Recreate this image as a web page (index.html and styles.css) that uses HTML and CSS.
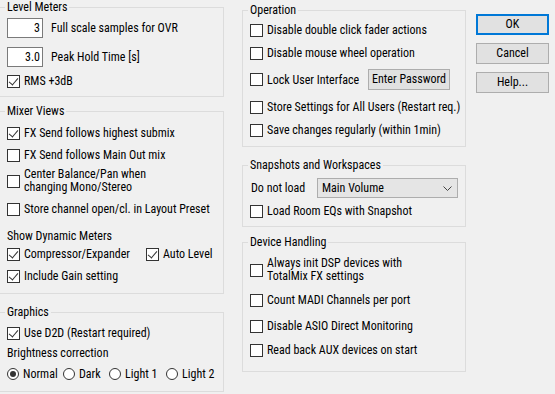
FILE: index.html
```html
<!DOCTYPE html>
<html lang="en">
<head>
	<meta charset="UTF-8">
	<title>Settings</title>
	<link rel="stylesheet" href="styles.css">
</head>
<body>
	<div class="dialog">
		<!-- left column -->
		<div class="col col-left">
			<div class="group g-level">
				<span class="group-title">Level Meters</span>
				<div class="field mt3"><span class="num">3</span><span>Full scale samples for OVR</span></div>
				<div class="field mt9"><span class="num">3.0</span><span>Peak Hold Time [s]</span></div>
				<div class="check mt6"><span class="cb on"></span><span>RMS +3dB</span></div>
			</div>
			<div class="group g-mixer">
				<span class="group-title">Mixer Views</span>
				<div class="check mt6"><span class="cb on"></span><span>FX Send follows highest submix</span></div>
				<div class="check mt6"><span class="cb"></span><span>FX Send follows Main Out mix</span></div>
				<div class="check two mt5"><span class="cb"></span><span>Center Balance/Pan when<br>changing Mono/Stereo</span></div>
				<div class="check mt7"><span class="cb"></span><span>Store channel open/cl. in Layout Preset</span></div>
				<div class="label mt11">Show Dynamic Meters</div>
				<div class="line mt2">
					<div class="check comp"><span class="cb on"></span><span>Compressor/Expander</span></div>
					<div class="check"><span class="cb on"></span><span>Auto Level</span></div>
				</div>
				<div class="check mt6"><span class="cb on"></span><span>Include Gain setting</span></div>
			</div>
			<div class="group g-graphics">
				<span class="group-title">Graphics</span>
				<div class="check mt5"><span class="cb on"></span><span>Use D2D (Restart required)</span></div>
				<div class="label mt4">Brightness correction</div>
				<div class="line mt5">
					<div class="radio r-normal"><span class="rb on"></span><span>Normal</span></div>
					<div class="radio r-dark"><span class="rb"></span><span>Dark</span></div>
					<div class="radio r-light"><span class="rb"></span><span>Light 1</span></div>
					<div class="radio"><span class="rb"></span><span>Light 2</span></div>
				</div>
			</div>
		</div>

		<!-- middle column -->
		<div class="col col-mid">
			<div class="group g-op">
				<span class="group-title">Operation</span>
				<div class="check mt4"><span class="cb"></span><span>Disable double click fader actions</span></div>
				<div class="check mt7"><span class="cb"></span><span>Disable mouse wheel operation</span></div>
				<div class="line lock mt8">
					<div class="check lock-label"><span class="cb"></span><span>Lock User Interface</span></div>
					<span class="btn pw">Enter Password</span>
				</div>
				<div class="check mt9"><span class="cb"></span><span>Store Settings for All Users (Restart req.)</span></div>
				<div class="check mt7"><span class="cb"></span><span>Save changes regularly (within 1min)</span></div>
			</div>
			<div class="group g-snap">
				<span class="group-title">Snapshots and Workspaces</span>
				<div class="line combo-row mt5">
					<span class="combo-label">Do not load</span>
					<span class="combo">Main Volume
						<svg class="chev" width="9" height="5" viewBox="0 0 9 5"><polyline points="0.5,0.5 4.5,4.5 8.5,0.5" fill="none" stroke="#444" stroke-width="1"/></svg>
					</span>
				</div>
				<div class="check mt5"><span class="cb"></span><span>Load Room EQs with Snapshot</span></div>
			</div>
			<div class="group g-dev">
				<span class="group-title">Device Handling</span>
				<div class="check two mt7"><span class="cb"></span><span>Always init DSP devices with<br>TotalMix FX settings</span></div>
				<div class="check mt9"><span class="cb"></span><span>Count MADI Channels per port</span></div>
				<div class="check mt10"><span class="cb"></span><span>Disable ASIO Direct Monitoring</span></div>
				<div class="check mt8"><span class="cb"></span><span>Read back AUX devices on start</span></div>
			</div>
		</div>

		<!-- buttons -->
		<div class="col col-btns">
			<span class="btn default">OK</span>
			<span class="btn">Cancel</span>
			<span class="btn">Help...</span>
		</div>
	</div>
</body>
</html>
```

FILE: styles.css
```css
*{
	margin: 0;
	padding: 0;
	box-sizing: border-box;
}
html,body{
	width: 555px;
	height: 394px;
	overflow: hidden;
	background: #f0f0f0;
}
body{
	font-family: "Roboto Condensed", Roboto, "Liberation Sans", sans-serif;
	font-size: 12px;
	color: #000;
}
.dialog{
	display: flex;
	align-items: flex-start;
}

/* columns */
.col-left{
	width: 225px;
	margin-left: -1px;
	padding-top: 7px;
}
.col-mid{
	width: 224px;
	margin-left: 18px;
	padding-top: 10px;
}
.col-btns{
	width: 73px;
	margin-left: 10px;
	padding-top: 14px;
	display: flex;
	flex-direction: column;
	gap: 8px;
}

/* group boxes */
.group{
	border: 1px solid #dcdcdc;
	padding: 0 7px;
}
.group-title{
	display: block;
	width: fit-content;
	height: 15px;
	line-height: 15px;
	margin: -8px 0 0 -2px;
	padding: 0 2px;
	background: #f0f0f0;
}
.g-level{ padding-bottom: 7px; }
.g-mixer{ margin-top: 14px; padding-bottom: 9px; }
.g-graphics{ margin-top: 18px; padding-bottom: 9px; }
.g-op{ padding-bottom: 8px; }
.g-snap{ margin-top: 18px; padding-bottom: 7px; }
.g-dev{ margin-top: 15px; padding-bottom: 13px; }

.mt2{ margin-top: 2px; }
.mt3{ margin-top: 3px; }
.mt4{ margin-top: 4px; }
.mt5{ margin-top: 5px; }
.mt6{ margin-top: 6px; }
.mt7{ margin-top: 7px; }
.mt8{ margin-top: 8px; }
.mt9{ margin-top: 9px; }
.mt10{ margin-top: 10px; }
.mt11{ margin-top: 11px; }

/* rows */
.check,
.radio,
.label{
	display: flex;
	align-items: center;
	height: 16px;
	line-height: 16px;
	white-space: nowrap;
}
.check{ gap: 4px; }
.check.two{
	height: 26px;
	line-height: 13px;
}
.line{
	display: flex;
	align-items: center;
}
.field{
	display: flex;
	align-items: center;
	height: 20px;
	gap: 8px;
}
.num{
	width: 36px;
	height: 20px;
	line-height: 18px;
	border: 1px solid #7a7a7a;
	background: #fff;
	text-align: right;
	padding-right: 2px;
}

/* checkbox */
.cb{
	flex: none;
	position: relative;
	width: 13px;
	height: 13px;
	border: 1px solid #333;
	background: #fff;
}
.cb.on::after{
	content: "";
	position: absolute;
	left: 3px;
	top: 0;
	width: 4px;
	height: 8px;
	border: solid #333;
	border-width: 0 1px 1px 0;
	transform: rotate(40deg);
}
.comp{ width: 139px; }

/* radio */
.radio{ gap: 4px; }
.rb{
	flex: none;
	position: relative;
	width: 12px;
	height: 12px;
	border: 1px solid #333;
	border-radius: 50%;
	background: #fff;
}
.rb.on::after{
	content: "";
	position: absolute;
	left: 2px;
	top: 2px;
	width: 6px;
	height: 6px;
	border-radius: 50%;
	background: #333;
}
.r-normal{ width: 56px; }
.r-dark{ width: 46px; }
.r-light{ width: 57px; }

/* buttons */
.btn{
	display: block;
	height: 21px;
	line-height: 19px;
	text-align: center;
	white-space: nowrap;
	border: 1px solid #adadad;
	background: #e1e1e1;
}
.btn.default{
	border: 2px solid #0078d7;
	line-height: 17px;
}
.lock{ height: 21px; }
.lock-label{ width: 118px; }
.pw{ width: 82px; }

/* combo */
.combo-row{ height: 20px; }
.combo-label{
	width: 67px;
	padding-left: 1px;
}
.combo{
	position: relative;
	width: 141px;
	height: 20px;
	line-height: 18px;
	padding-left: 4px;
	border: 1px solid #adadad;
	background: #e5e5e5;
}
.chev{
	position: absolute;
	right: 5px;
	top: 7px;
}
```
